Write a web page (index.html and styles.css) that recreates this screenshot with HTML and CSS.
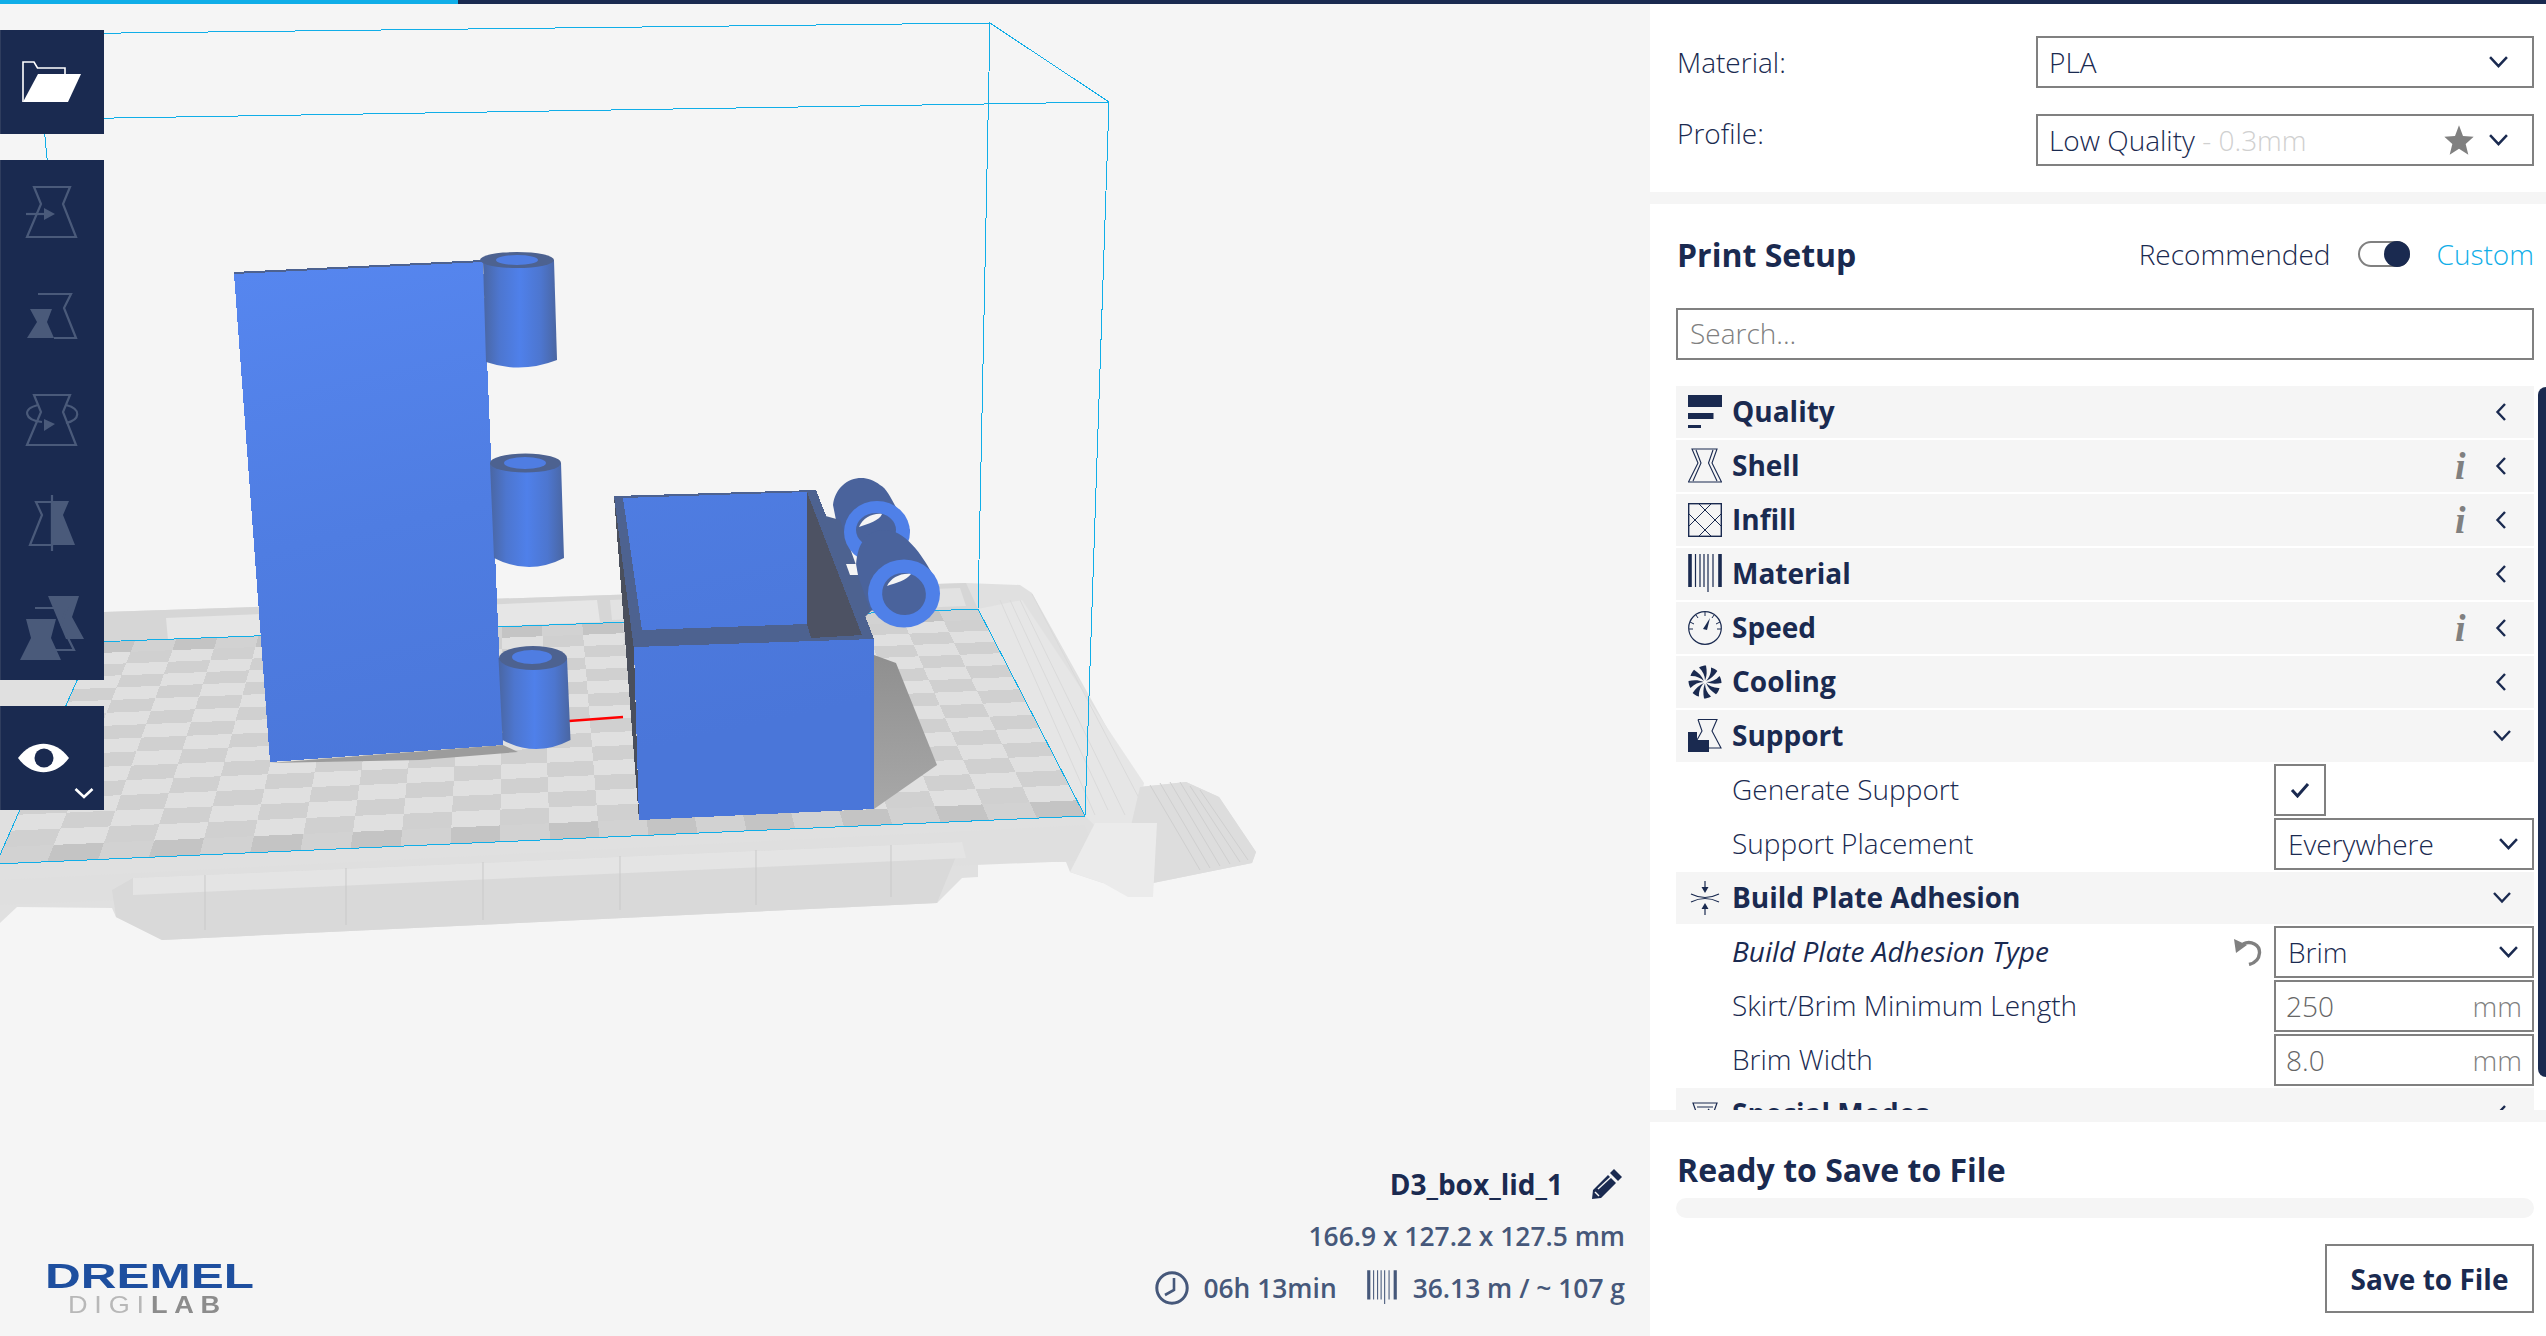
FILE: index.html
```html
<!doctype html>
<html lang="en">
<head>
  <meta charset="utf-8">
  <title>Dremel DigiLab 3D Slicer</title>
  <link rel="stylesheet" href="styles.css">
</head>
<body>
  <svg class="defs" width="0" height="0">
    <symbol id="chev-left" viewBox="0 0 18 18"><path d="M12 1 L4.5 9 L12 17" fill="none" stroke="#1a2a50" stroke-width="2.4"/></symbol>
    <symbol id="chev-down" viewBox="0 0 18 18"><path d="M1 4 L9 12.5 L17 4" fill="none" stroke="#1a2a50" stroke-width="2.4"/></symbol>
    <symbol id="barcode" viewBox="0 -3 34 40">
      <path d="M2 -3 V30 M32 -3 V30" stroke="currentColor" stroke-width="3.6" fill="none"/>
      <path d="M7.5 -3 V30 M12 -3 V30 M16 -3 V30 M20 -3 V35 M25 -3 V30" stroke="currentColor" stroke-width="1.2" fill="none"/>
    </symbol>
    <path id="blade" d="M17 15.5 C17 11 15 6 11 2.5 C13.5 1 16 0.5 18 0.5 C19 6 19 11 17 15.5 Z" fill="#1a2a50"/>
  </svg>

  <div class="topbar"><div class="topbar-progress"></div></div>

  <div class="app">
    <main class="viewport">
      <svg id="scene" class="scene" viewBox="0 4 1650 1332" width="1650" height="1332">
        <defs>
          <linearGradient id="blue" gradientUnits="userSpaceOnUse" x1="300" y1="260" x2="420" y2="800">
            <stop offset="0" stop-color="#5686ef"/>
            <stop offset="0.5" stop-color="#4f7de2"/>
            <stop offset="1" stop-color="#4a76d9"/>
          </linearGradient>
          <linearGradient id="cyl" x1="0" y1="0" x2="1" y2="0">
            <stop offset="0" stop-color="#4a66a2"/>
            <stop offset="0.22" stop-color="#4d76cf"/>
            <stop offset="0.5" stop-color="#4f80ea"/>
            <stop offset="0.78" stop-color="#4d76cf"/>
            <stop offset="1" stop-color="#4a66a2"/>
          </linearGradient>
          <linearGradient id="shadow" x1="0" y1="0" x2="0" y2="1">
            <stop offset="0" stop-color="#8f8f8f"/>
            <stop offset="1" stop-color="#a8a8a8"/>
          </linearGradient>
        </defs>

        <!-- print bed -->
        <g>
          <polygon fill="#e0e0e0" points="0,623 104,612 966,583 1020,585 1032,593 1140,787 1186,782 1219,797 1256,852 1252,863 1153,883 1153,897 1128,897 1128,883 1103,883 1070,872 1066,862 978,862 978,877 962,878 937,903 162,940 116,917 112,908 17,907 0,923"/>
          <polygon fill="#d6d6d6" points="0,624 104,612 966,583 978,609 94,642 0,650"/>
          <polygon fill="#e6e6e6" points="166,618 597,600 600,622 168,640"/>
          <polygon fill="#e2e2e2" points="610,600 960,588 966,606 612,620"/>
          <polygon fill="#dfdfdf" points="0,880 1085,825 1100,860 0,905"/>
          <polygon fill="#d9d9d9" points="133,878 962,842 937,903 162,940 116,917 112,890"/>
          <polygon fill="#e4e4e4" points="133,878 962,842 966,858 133,895"/>
          <path stroke="#c9c9c9" fill="none" d="M205 875 V930 M346 868 V925 M483 862 V920 M620 856 V910 M756 850 V905 M891 845 V897"/>
          <polygon fill="#e6e6e6" points="978,609 1022,600 1144,783 1130,860 1085,816"/>
          <path stroke="#dadada" fill="none" d="M1000 600 L1095 815 M1010 600 L1108 810 M1020 600 L1125 815 M1032 594 L1140 800"/>
          <polygon fill="#dddddd" points="1140,787 1186,782 1219,797 1256,852 1252,863 1153,883 1130,830"/>
          <path stroke="#cfcfcf" fill="none" d="M1150 785 L1200 870 M1160 783 L1210 868 M1170 782 L1220 866 M1180 782 L1230 864 M1190 786 L1240 862 M1200 790 L1248 860"/>
          <polygon fill="#ebebeb" points="1095,823 1157,823 1153,897 1128,897 1103,883 1070,872"/>
          <g id="tiles" shape-rendering="crispEdges"></g>
          <polygon fill="url(#shadow)" points="874,655 896,663 937,765 874,809"/>
          <polygon fill="#9c9c9c" points="269,763 503,745 518,752 420,760"/>
        </g>

        <!-- build volume -->
        <g class="volume" shape-rendering="crispEdges">
          <path d="M94 642 L978 609 L1085 816 L-4 864 Z"/>
          <path d="M94 642 L35 34 L990 23 L1109 102 L-10 120"/>
          <path d="M990 23 L978 609 M1109 102 L1085 816"/>
        </g>

        <line x1="569" y1="721" x2="623" y2="717" stroke="#f00" stroke-width="2.5"/>

        <!-- lid with hinges -->
        <g shape-rendering="crispEdges">
          <polygon fill="#4d6290" points="234,272 483,260 483,264 234,275"/>
          <polygon fill="url(#blue)" points="234,274 483,262 503,745 270,762"/>
        </g>
        <path fill="url(#cyl)" d="M483 261 L486 362 Q521 374 557 360 L554 260 Z"/>
        <ellipse cx="517" cy="260" rx="37" ry="8" fill="#4d6290"/>
        <ellipse cx="517" cy="260" rx="21" ry="5" fill="#4f7de2"/>
        <path fill="url(#cyl)" d="M490 463 L494 558 Q529 576 564 558 L561 463 Z"/>
        <ellipse cx="525.5" cy="463" rx="35.5" ry="9.5" fill="#4d6290"/>
        <ellipse cx="525" cy="463" rx="21" ry="6" fill="#4f7de2"/>
        <path fill="url(#cyl)" d="M498.5 658 L502.5 740 Q536 758 570.5 740 L567 658 Z"/>
        <ellipse cx="533" cy="658" rx="34" ry="12" fill="#4d6290"/>
        <ellipse cx="532" cy="657" rx="20" ry="7" fill="#4f7de2"/>

        <!-- box with hinge pins -->
        <path fill="#4a639c" d="M833 505 C836 480 862 470 880 485 C890 490 895 510 910 530 L900 560 L840 540 Z"/>
        <polygon fill="#4d6290" points="822,515 840,520 872,610 862,620"/>
        <ellipse cx="877" cy="532" rx="33" ry="31" fill="#4f80e8"/>
        <ellipse cx="876" cy="530" rx="20" ry="17" fill="#4a639c"/>
        <path fill="#f5f5f5" d="M859 527 C863 518 872 513 882 514 C880 520 868 524 859 527 Z"/>
        <path fill="#4a639c" d="M856 570 C856 540 870 525 895 532 C915 540 930 570 936 580 L920 620 L870 610 Z"/>
        <polygon fill="#f5f5f5" points="846,564 856,564 858,575 850,575"/>
        <ellipse cx="904" cy="593.5" rx="36" ry="34" fill="#4f80e8"/>
        <ellipse cx="904" cy="594" rx="22" ry="21" fill="#4a639c" transform="rotate(20 904 594)"/>
        <path fill="#f5f5f5" d="M887 586 C891 578 900 573 911 574 C907 580 896 583 887 586 Z"/>

        <g shape-rendering="crispEdges">
          <polygon fill="#4a4f5c" points="614,496 634,650 639,820"/>
          <polygon fill="#4d6290" points="614,496 816,490 874,639 874,650 634,650"/>
          <polygon fill="url(#blue)" points="623,498 807,492 807,624 642,630"/>
          <polygon fill="#4d5263" points="807,492 862,635 811,638 807,624"/>
          <polygon fill="url(#blue)" points="634,647 874,639 874,809 639,820"/>
        </g>
      </svg>

      <div class="tools">
        <button class="tool-btn">
          <svg viewBox="0 0 104 104" width="104" height="104">
            <path d="M23 72 V32 H34 L37.5 38 H65 V44" fill="none" stroke="#fff" stroke-width="1.6"/>
            <path d="M23 72 H68 L81 44 H38 Z" fill="#fff"/>
          </svg>
        </button>
        <div class="tool-group">
          <button class="tool-btn">
            <svg viewBox="0 0 104 104" width="104" height="104">
              <path d="M34 27 H70 L63 44 L76 77 H27 L41 44 Z" class="tool-line"/>
              <path d="M26 54 H46" class="tool-line"/>
              <path d="M44 48 L55 54 L44 60 Z" class="tool-fill"/>
            </svg>
          </button>
          <button class="tool-btn">
            <svg viewBox="0 0 104 104" width="104" height="104">
              <path d="M38 30 H71 L64 44 L76 74 H54" class="tool-line"/>
              <path d="M30 45 H52 L47 58 L54 74 H27 L37 58 Z" class="tool-fill"/>
            </svg>
          </button>
          <button class="tool-btn">
            <svg viewBox="0 0 104 104" width="104" height="104">
              <path d="M34 27 H70 L63 44 L76 77 H27 L41 44 Z" class="tool-line"/>
              <path d="M38 37 C22 41 24 52 42 54 M66 37 C82 41 80 52 66 55" class="tool-line"/>
              <path d="M44 51 L55 56 L44 63 Z" class="tool-fill"/>
            </svg>
          </button>
          <button class="tool-btn">
            <svg viewBox="0 0 104 104" width="104" height="104">
              <path d="M36 30 H52 V73 H30 L42 43 Z" class="tool-line"/>
              <path d="M52 29 H69 L63 43 L75 73 H52 Z" class="tool-fill"/>
              <path d="M52 23 V79" class="tool-line"/>
            </svg>
          </button>
          <button class="tool-btn">
            <svg viewBox="0 0 104 104" width="104" height="104">
              <path d="M48 20 H79 L72 41 L84 63 H66 Z" class="tool-fill"/>
              <path d="M35 32 H67 L61 48 L74 74 H55" class="tool-line"/>
              <path d="M26 43 H56 L51 62 L61 84 H20 L31 62 Z" class="tool-fill"/>
            </svg>
          </button>
        </div>
        <button class="tool-btn">
          <svg viewBox="0 0 104 104" width="104" height="104">
            <path d="M18 52 C32 33 55 33 69 52 C55 71 32 71 18 52 Z" fill="#fff"/>
            <circle cx="44" cy="52" r="9.5" fill="#1a2a50"/>
            <path d="M75.5 83 L84 91 L92.5 83" fill="none" stroke="#fff" stroke-width="2.6"/>
          </svg>
        </button>
      </div>

      <div class="logo">
        <svg viewBox="0 0 220 60" width="220" height="60">
          <text x="0" y="25" class="logo-main" textLength="209" lengthAdjust="spacingAndGlyphs">DREMEL</text>
          <text x="23" y="50" class="logo-sub" textLength="159" lengthAdjust="spacingAndGlyphs"><tspan class="logo-digi">DIGI</tspan>LAB</text>
        </svg>
      </div>

      <div class="model-info">
        <div class="model-name">
          <span>D3_box_lid_1</span>
          <svg class="pencil" viewBox="0 0 32 32" width="32" height="32">
            <path d="M23 1 L31 9 L27 13 L19 5 Z M17 7 L25 15 L10 30 L1 31 L2 22 Z" fill="#1a2a50"/>
            <path d="M7 21 L20 9" stroke="#f5f5f5" stroke-width="1.4"/>
            <path d="M4 24 L8 28" stroke="#f5f5f5" stroke-width="1.4"/>
          </svg>
        </div>
        <div class="model-size">166.9 x 127.2 x 127.5 mm</div>
        <div class="model-stats">
          <svg class="stat-icon" viewBox="0 0 34 34" width="34" height="34">
            <circle cx="17" cy="17" r="15.2" fill="none" stroke="currentColor" stroke-width="3"/>
            <path d="M19 7 V19 L10 24" fill="none" stroke="currentColor" stroke-width="2.6"/>
          </svg>
          <span>06h 13min</span>
          <svg class="stat-bars" width="30" height="36"><use href="#barcode"/></svg>
          <span>36.13 m / ~ 107 g</span>
        </div>
      </div>
    </main>

    <aside class="sidebar">
      <section class="panel panel-material">
        <div class="field-row">
          <label class="field-label">Material:</label>
          <div class="select">
            <span>PLA</span>
            <svg class="select-chev" width="19" height="19"><use href="#chev-down"/></svg>
          </div>
        </div>
        <div class="field-row">
          <label class="field-label field-label-up">Profile:</label>
          <div class="select">
            <span>Low Quality <span class="select-dim">- 0.3mm</span></span>
            <svg class="star" viewBox="0 0 24 24" width="32" height="32"><path d="M12 1 L15 9 L23 9.5 L17 15 L19 23 L12 18.5 L5 23 L7 15 L1 9.5 L9 9 Z" fill="#808080"/></svg>
            <svg class="select-chev" width="19" height="19"><use href="#chev-down"/></svg>
          </div>
        </div>
      </section>

      <section class="panel panel-setup">
        <div class="setup-head">
          <h2 class="panel-title">Print Setup</h2>
          <div class="mode-switch">
            <span>Recommended</span>
            <div class="toggle"><div class="toggle-knob"></div></div>
            <span class="mode-custom">Custom</span>
          </div>
        </div>
        <div class="search">Search...</div>

        <div class="settings">
          <div class="scrollbar"></div>

          <div class="cat">
            <svg class="cat-icon" viewBox="0 -3 34 40" width="34" height="40">
              <path d="M0 0 H34 V12 H0 Z M0 18 H25.5 V24 H0 Z M0 30 H13 V33 H0 Z" fill="#1a2a50"/>
            </svg>
            <span class="cat-name">Quality</span>
            <svg class="chev" width="18" height="18"><use href="#chev-left"/></svg>
          </div>
          <div class="cat">
            <svg class="cat-icon" viewBox="0 -3 34 40" width="34" height="40">
              <path d="M4 0 H29 L24 14 L33.5 33 H0.5 L10 14 Z M8 1 L13 14 L5 32 M25 1 L20.5 14 L29 32" fill="none" stroke="#1a2a50" stroke-width="1.1"/>
            </svg>
            <span class="cat-name">Shell</span>
            <span class="info">i</span>
            <svg class="chev" width="18" height="18"><use href="#chev-left"/></svg>
          </div>
          <div class="cat">
            <svg class="cat-icon" viewBox="0 -3 34 40" width="34" height="40">
              <rect x="0.7" y="0.7" width="32.6" height="32.6" fill="none" stroke="#1a2a50" stroke-width="1.4"/>
              <path d="M0 10 L24 34 M10 0 L34 24 M0 24 L24 0 M10 34 L34 10" fill="none" stroke="#1a2a50" stroke-width="1"/>
            </svg>
            <span class="cat-name">Infill</span>
            <span class="info">i</span>
            <svg class="chev" width="18" height="18"><use href="#chev-left"/></svg>
          </div>
          <div class="cat">
            <svg class="cat-icon cat-bars" width="34" height="40"><use href="#barcode"/></svg>
            <span class="cat-name">Material</span>
            <svg class="chev" width="18" height="18"><use href="#chev-left"/></svg>
          </div>
          <div class="cat">
            <svg class="cat-icon" viewBox="0 -3 34 40" width="34" height="40">
              <circle cx="17" cy="17" r="16.3" fill="none" stroke="#1a2a50" stroke-width="1.2"/>
              <path d="M17 1 V5 M8 4 L10 7 M26 4 L24 7 M2 11 L6 13 M32 11 L28 13 M1 18 H5 M29 18 H33" stroke="#1a2a50" stroke-width="1"/>
              <path d="M22 7 L19 19 L15 18 Z" fill="#1a2a50"/>
            </svg>
            <span class="cat-name">Speed</span>
            <span class="info">i</span>
            <svg class="chev" width="18" height="18"><use href="#chev-left"/></svg>
          </div>
          <div class="cat">
            <svg class="cat-icon" viewBox="0 -3 34 40" width="34" height="40">
              <use href="#blade"/>
              <use href="#blade" transform="rotate(45 17 17)"/>
              <use href="#blade" transform="rotate(90 17 17)"/>
              <use href="#blade" transform="rotate(135 17 17)"/>
              <use href="#blade" transform="rotate(180 17 17)"/>
              <use href="#blade" transform="rotate(225 17 17)"/>
              <use href="#blade" transform="rotate(270 17 17)"/>
              <use href="#blade" transform="rotate(315 17 17)"/>
            </svg>
            <span class="cat-name">Cooling</span>
            <svg class="chev" width="18" height="18"><use href="#chev-left"/></svg>
          </div>
          <div class="cat">
            <svg class="cat-icon" viewBox="0 -3 34 40" width="34" height="40">
              <path d="M10 0.5 H29 L24 12 L33 29 H20 M10 0.5 L14 12 L9 21" fill="none" stroke="#1a2a50" stroke-width="1.1"/>
              <path d="M0 13 H9 V21 H21 V33 H0 Z" fill="#1a2a50"/>
            </svg>
            <span class="cat-name">Support</span>
            <svg class="chev" width="18" height="18"><use href="#chev-down"/></svg>
          </div>

          <div class="setting">
            <span class="setting-name">Generate Support</span>
            <div class="setting-control">
              <div class="checkbox">
                <svg viewBox="0 0 20 16" width="20" height="16"><path d="M2 8 L7.5 14 L18 2" fill="none" stroke="#1a2a50" stroke-width="3"/></svg>
              </div>
            </div>
          </div>
          <div class="setting">
            <span class="setting-name">Support Placement</span>
            <div class="setting-control">
              <div class="select select-small">
                <span>Everywhere</span>
                <svg class="select-chev" width="19" height="19"><use href="#chev-down"/></svg>
              </div>
            </div>
          </div>

          <div class="cat">
            <svg class="cat-icon" viewBox="0 -3 34 40" width="34" height="40">
              <path d="M17 0 V9 M17 34 V25 M3 13 Q17 20 31 13 M3 21 Q17 14 31 21" fill="none" stroke="#1a2a50" stroke-width="1.2"/>
              <path d="M13.5 6 H20.5 L17 12 Z M13.5 28 H20.5 L17 22 Z" fill="#1a2a50"/>
            </svg>
            <span class="cat-name">Build Plate Adhesion</span>
            <svg class="chev" width="18" height="18"><use href="#chev-down"/></svg>
          </div>

          <div class="setting">
            <span class="setting-name setting-changed">Build Plate Adhesion Type</span>
            <svg class="undo" viewBox="0 0 28 28" width="28" height="28">
              <path d="M9 6 C17 2 26 7 25.5 15 C25 21 21 25 15 26.5" fill="none" stroke="#808080" stroke-width="3.4"/>
              <path d="M0 1 L2 15 L13 7 Z" fill="#808080"/>
            </svg>
            <div class="setting-control">
              <div class="select select-small">
                <span>Brim</span>
                <svg class="select-chev" width="19" height="19"><use href="#chev-down"/></svg>
              </div>
            </div>
          </div>
          <div class="setting">
            <span class="setting-name">Skirt/Brim Minimum Length</span>
            <div class="setting-control">
              <div class="number"><span>250</span><span class="unit">mm</span></div>
            </div>
          </div>
          <div class="setting">
            <span class="setting-name">Brim Width</span>
            <div class="setting-control">
              <div class="number"><span>8.0</span><span class="unit">mm</span></div>
            </div>
          </div>

          <div class="cat">
            <svg class="cat-icon" viewBox="0 -3 34 40" width="34" height="40">
              <path d="M5 6 H29 L24 20 L31 34 H3 L10 20 Z M9 10 H25 M20 12 Q25 16 18 22" fill="none" stroke="#1a2a50" stroke-width="1.2"/>
            </svg>
            <span class="cat-name">Special Modes</span>
            <svg class="chev" width="18" height="18"><use href="#chev-left"/></svg>
          </div>
        </div>
      </section>

      <section class="panel panel-save">
        <h2 class="save-title">Ready to Save to File</h2>
        <div class="progress"></div>
        <div class="save-actions"><button class="save-btn">Save to File</button></div>
      </section>
    </aside>
  </div>

  <script src="scene.js"></script>
</body>
</html>
```

FILE: styles.css
```css
* {
    box-sizing: border-box;
}

body {
    margin: 0;
    height: 100vh;
    overflow: hidden;
    display: flex;
    flex-direction: column;
    background-color: #f5f5f5;
    color: #1a2a50;
    font-family: "Open Sans", "Noto Sans", sans-serif;
    font-size: 28px;
    font-weight: 300;
}

.defs {
    position: absolute;
}

.topbar {
    height: 4px;
    flex: none;
    background-color: #1a2a50;
}

.topbar-progress {
    width: 458px;
    height: 100%;
    background-color: #10aee8;
}

.app {
    flex: 1;
    display: flex;
    min-height: 0;
}

/* 3d view */
.viewport {
    position: relative;
    flex: 1;
    overflow: hidden;
}

.scene {
    position: absolute;
    top: 0;
    left: 0;
}

.volume path {
    fill: none;
    stroke: #10aee8;
    stroke-width: 1;
}

.tools {
    position: absolute;
    top: 26px;
    left: 0;
    width: 104px;
    display: flex;
    flex-direction: column;
    gap: 26px;
}

.tool-group {
    display: flex;
    flex-direction: column;
}

.tool-btn {
    display: block;
    width: 104px;
    height: 104px;
    padding: 0;
    border: 0;
    background-color: #1a2a50;
    box-shadow: inset 1px 0 #2f3d5e;
}

.tool-btn svg {
    display: block;
}

.tool-line {
    fill: none;
    stroke: #4a5a7a;
    stroke-width: 2.2;
}

.tool-fill {
    fill: #4a5a7a;
}

.logo {
    position: absolute;
    left: 45px;
    top: 1259px;
    filter: blur(0.7px);
}

.logo svg {
    display: block;
    overflow: visible;
}

.logo-main {
    font-family: "Liberation Sans", sans-serif;
    font-size: 35px;
    font-weight: 700;
    fill: #1e4f9f;
}

.logo-sub {
    font-family: "Liberation Sans", sans-serif;
    font-size: 24px;
    font-weight: 700;
    letter-spacing: 6px;
    fill: #8c8c8c;
}

.logo-digi {
    font-weight: 400;
    fill: #b8b8b8;
}

.model-info {
    position: absolute;
    right: 25px;
    bottom: 24px;
    display: flex;
    flex-direction: column;
    align-items: flex-end;
    color: #46587a;
    font-size: 26.4px;
    font-weight: 600;
}

.model-name {
    display: flex;
    align-items: center;
    gap: 28px;
    height: 48px;
    color: #1a2a50;
    font-size: 28px;
    font-weight: 700;
}

.pencil {
    margin-right: 2px;
}

.model-size {
    height: 56px;
    line-height: 56px;
}

.model-stats {
    display: flex;
    align-items: center;
    height: 48px;
}

.stat-icon {
    margin-right: 14px;
}

.stat-bars {
    margin: 0 16px 0 30px;
    color: #46587a;
}

/* right side */
.sidebar {
    flex: none;
    width: 896px;
    display: flex;
    flex-direction: column;
    gap: 12px;
}

.panel {
    background-color: #fff;
    padding-left: 26px;
    padding-right: 12px;
}

.panel-material {
    height: 188px;
    padding-top: 32px;
    display: flex;
    flex-direction: column;
    gap: 26px;
}

.field-row {
    display: flex;
    align-items: center;
}

.field-label {
    width: 360px;
    padding-left: 1px;
    padding-bottom: 1px;
}

.field-label-up {
    padding-bottom: 14px;
}

.select {
    flex: 1;
    display: flex;
    align-items: center;
    height: 52px;
    padding: 0 24px 0 11px;
    border: 2px solid #808080;
    white-space: nowrap;
}

.select > span:first-child {
    flex: 1;
}

.select-dim {
    color: #d0d0d0;
}

.star {
    margin-right: 14px;
}

.panel-setup {
    height: 906px;
    padding-top: 24px;
    padding-right: 0;
    display: flex;
    flex-direction: column;
}

.setup-head {
    display: flex;
    align-items: center;
    justify-content: space-between;
    height: 52px;
    padding-right: 12px;
}

.panel-title {
    margin: 0 0 0 1px;
    font-size: 32px;
    font-weight: 700;
}

.mode-switch {
    display: flex;
    align-items: center;
    gap: 27px;
}

.mode-custom {
    color: #10aee8;
}

.toggle {
    width: 52px;
    height: 26px;
    border: 2px solid #808080;
    border-radius: 13px;
    background-color: #fff;
    position: relative;
}

.toggle-knob {
    position: absolute;
    top: -2px;
    right: -2px;
    width: 26px;
    height: 26px;
    border-radius: 50%;
    background-color: #1a2a50;
}

.search {
    height: 52px;
    margin-top: 28px;
    margin-right: 12px;
    padding: 0 12px;
    border: 2px solid #808080;
    line-height: 46px;
    color: #808080;
}

.settings {
    position: relative;
    flex: 1;
    min-height: 0;
    margin-top: 26px;
    padding-right: 12px;
    overflow: hidden;
    display: flex;
    flex-direction: column;
    gap: 2px;
}

.scrollbar {
    position: absolute;
    top: 1px;
    right: 0;
    bottom: 33px;
    width: 8px;
    border-radius: 8px 0 0 8px;
    background-color: #1a2a50;
}

.cat {
    flex: none;
    display: flex;
    align-items: center;
    height: 52px;
    padding-left: 12px;
    background-color: #f5f5f5;
}

.cat-icon {
    flex: none;
    margin-right: 10px;
    color: #1a2a50;
}

.cat-name {
    flex: 1;
    font-weight: 700;
    padding-bottom: 2px;
}

.info {
    width: 12px;
    margin-right: 26px;
    font-family: "Liberation Serif", serif;
    font-size: 38px;
    font-style: italic;
    font-weight: 700;
    line-height: 1;
    color: #808080;
}

.chev {
    flex: none;
    margin-right: 23px;
}

.setting {
    flex: none;
    display: flex;
    align-items: center;
    height: 52px;
    padding-left: 56px;
}

.setting-name {
    flex: 1;
    padding-bottom: 2px;
}

.setting-changed {
    font-style: italic;
    font-weight: 400;
}

.undo {
    margin-right: 12px;
}

.setting-control {
    width: 260px;
}

.select-small {
    height: 52px;
    padding: 0 14px 0 12px;
}

.checkbox {
    width: 52px;
    height: 52px;
    border: 2px solid #808080;
    display: flex;
    align-items: center;
    justify-content: center;
}

.number {
    display: flex;
    align-items: center;
    justify-content: space-between;
    height: 52px;
    padding: 0 10px;
    border: 2px solid #808080;
    color: #666;
}

.unit {
    color: #808080;
}

.panel-save {
    flex: 1;
    padding-top: 28px;
}

.save-title {
    margin: 0 0 0 1px;
    font-size: 32px;
    font-weight: 700;
    line-height: 40px;
}

.progress {
    height: 20px;
    margin-top: 8px;
    border-radius: 10px;
    background-color: #f5f5f5;
}

.save-actions {
    display: flex;
    justify-content: flex-end;
    margin-top: 26px;
}

.save-btn {
    width: 209px;
    height: 69px;
    padding: 0;
    border: 2px solid #808080;
    background-color: #fff;
    color: #1a2a50;
    font-family: inherit;
    font-size: 28px;
    font-weight: 700;
}
```

FILE: scene.js
```js
// checker tiles of the bed, corners are back-left, back-right, front-right, front-left
const corners = [[94, 642], [978, 609], [1085, 816], [-4, 864]];
const cols = 22;
const rows = 16;

function homography(q) {
  const [[x0, y0], [x1, y1], [x2, y2], [x3, y3]] = q;
  const dx1 = x1 - x2, dx2 = x3 - x2, sx = x0 - x1 + x2 - x3;
  const dy1 = y1 - y2, dy2 = y3 - y2, sy = y0 - y1 + y2 - y3;
  const den = dx1 * dy2 - dx2 * dy1;
  const g = (sx * dy2 - dx2 * sy) / den;
  const h = (dx1 * sy - sx * dy1) / den;
  const a = x1 - x0 + g * x1, b = x3 - x0 + h * x3;
  const d = y1 - y0 + g * y1, e = y3 - y0 + h * y3;
  return (u, v) => {
    const w = g * u + h * v + 1;
    return [(a * u + b * v + x0) / w, (d * u + e * v + y0) / w];
  };
}

const map = homography(corners);
const tiles = document.getElementById("tiles");

for (let j = 0; j < rows; j++) {
  for (let i = 0; i < cols; i++) {
    const dark = (i + j) % 2 === 0;
    const edge = j === 0 || j === rows - 1;
    let color = dark ? "#d0d0d0" : "#e0e0e0";
    if (edge) color = dark ? "#c4c4c4" : "#d2d2d2";
    const pts = [
      map(i / cols, j / rows),
      map((i + 1) / cols, j / rows),
      map((i + 1) / cols, (j + 1) / rows),
      map(i / cols, (j + 1) / rows),
    ];
    const tile = document.createElementNS("http://www.w3.org/2000/svg", "polygon");
    tile.setAttribute("points", pts.map((p) => p.join(",")).join(" "));
    tile.setAttribute("fill", color);
    tiles.appendChild(tile);
  }
}
```
